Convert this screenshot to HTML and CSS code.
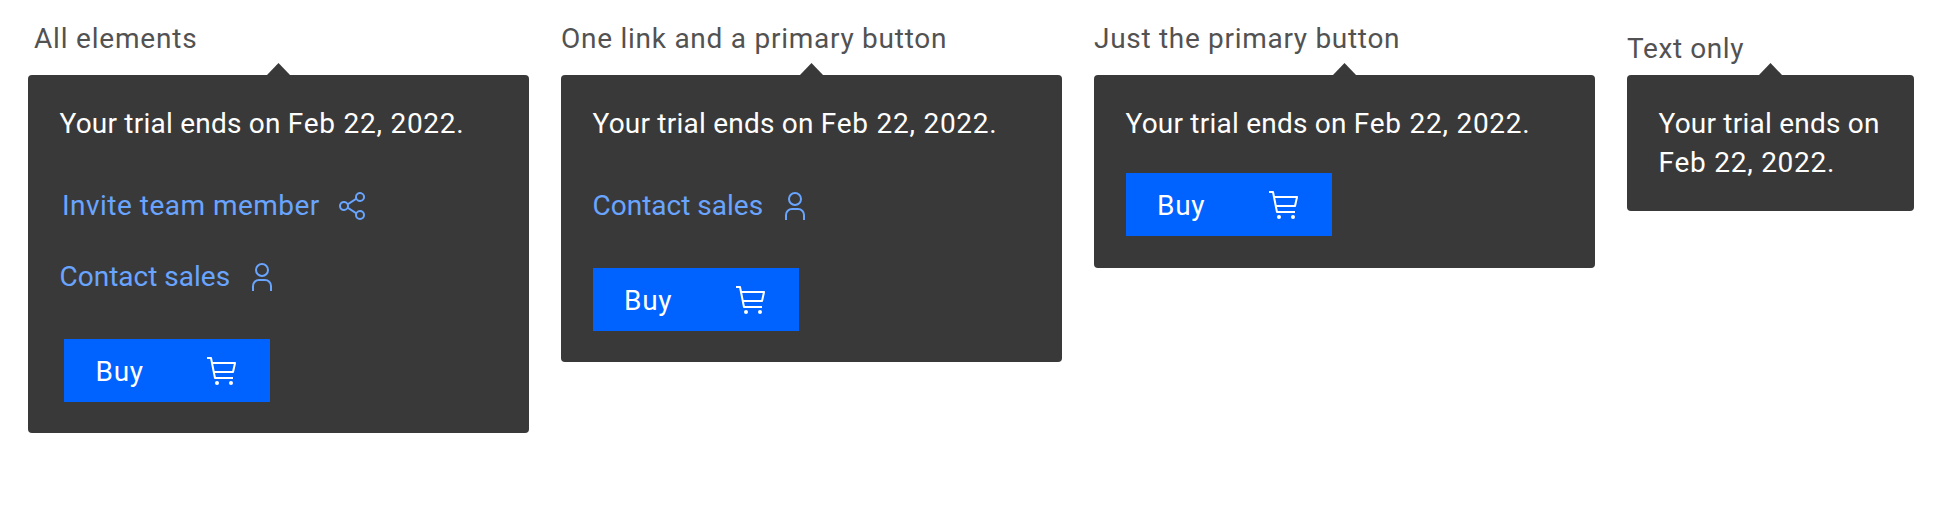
FILE: index.html
```html
<!DOCTYPE html>
<html lang="en">
<head>
<meta charset="utf-8">
<title>Trial popovers</title>
<link rel="stylesheet" href="styles.css">
</head>
<body>
<svg class="sprite" aria-hidden="true">
  <symbol id="share" viewBox="0 0 32 32"><path d="M23,20a5,5,0,0,0-3.89,1.89L11.8,17.32a4.46,4.46,0,0,0,0-2.64l7.31-4.57A5,5,0,1,0,18,7a4.79,4.79,0,0,0,.2,1.32l-7.31,4.57a5,5,0,1,0,0,6.22l7.31,4.57A4.79,4.79,0,0,0,18,25a5,5,0,1,0,5-5ZM23,4a3,3,0,1,1-3,3A3,3,0,0,1,23,4ZM7,19a3,3,0,1,1,3-3A3,3,0,0,1,7,19Zm16,9a3,3,0,1,1,3-3A3,3,0,0,1,23,28Z"/></symbol>
  <symbol id="user" viewBox="0 0 32 32"><path d="M16,4a5,5,0,1,1-5,5,5,5,0,0,1,5-5m0-2a7,7,0,1,0,7,7A7,7,0,0,0,16,2ZM26,30H24V25a5,5,0,0,0-5-5H13a5,5,0,0,0-5,5v5H6V25a7,7,0,0,1,7-7h6a7,7,0,0,1,7,7Z"/></symbol>
  <symbol id="cart" viewBox="0 0 32 32"><circle cx="10" cy="28" r="2"/><circle cx="24" cy="28" r="2"/><path d="M28,7H5.82L5,2.8A1,1,0,0,0,4,2H0V4H3.18L7,23.2A1,1,0,0,0,8,24H26V22H8.82L8,18H26a1,1,0,0,0,1-.78l2-9A1,1,0,0,0,28,7Zm-2.8,9H7.62l-1.4-7H26.8Z"/></symbol>
</svg>
<main class="board">
  <section class="example">
    <h2 class="label label-all">All elements</h2>
    <div class="popover popover-all">
      <p class="message">Your trial ends on <span class="date">Feb 22, 2022.</span></p>
      <a class="link link-invite"><span>Invite team member</span><svg class="icon"><use href="#share"/></svg></a>
      <a class="link link-contact link-next"><span>Contact sales</span><svg class="icon"><use href="#user"/></svg></a>
      <button class="buy buy-indent"><span class="buy-text">Buy</span><svg class="icon"><use href="#cart"/></svg></button>
    </div>
  </section>
  <section class="example">
    <h2 class="label label-link">One link and a primary button</h2>
    <div class="popover popover-link">
      <p class="message">Your trial ends on <span class="date">Feb 22, 2022.</span></p>
      <a class="link link-contact"><span>Contact sales</span><svg class="icon"><use href="#user"/></svg></a>
      <button class="buy"><span class="buy-text">Buy</span><svg class="icon"><use href="#cart"/></svg></button>
    </div>
  </section>
  <section class="example">
    <h2 class="label label-button">Just the primary button</h2>
    <div class="popover popover-button">
      <p class="message">Your trial ends on <span class="date">Feb 22, 2022.</span></p>
      <button class="buy buy-close"><span class="buy-text">Buy</span><svg class="icon"><use href="#cart"/></svg></button>
    </div>
  </section>
  <section class="example example-small">
    <h2 class="label label-text">Text only</h2>
    <div class="popover popover-text">
      <p class="message">Your trial ends on<br><span class="date">Feb 22, 2022.</span></p>
    </div>
  </section>
</main>
</body>
</html>
```
FILE: styles.css
```css
* { box-sizing: border-box; }
body {
  margin: 0;
  background: #fff;
  font-family: Roboto, "Liberation Sans", sans-serif;
  font-size: 28px;
  line-height: 39px;
  letter-spacing: 0.7px;
}
.sprite { display: none; }
.board { display: flex; align-items: flex-start; gap: 32px; padding-left: 28px; }
.example { flex: none; width: 501px; }
.example-small { width: 287px; }
.label {
  height: 75px;
  margin: 0;
  padding-top: 19px;
  color: #525252;
  font-size: inherit;
  font-weight: 400;
  white-space: nowrap;
}
.label-all { padding-left: 6px; letter-spacing: 0.8px; }
.label-link { letter-spacing: 0.74px; }
.label-text { padding-top: 29px; letter-spacing: 0.6px; }
.popover {
  position: relative;
  padding: 29px 31.5px;
  border-radius: 4px;
  background: #393939;
  color: #fff;
}
.popover::before {
  content: "";
  position: absolute;
  top: -12px;
  left: 50%;
  width: 24px;
  height: 12.5px;
  margin-left: -12px;
  background: #393939;
  clip-path: polygon(50% 0, 100% 100%, 0 100%);
}
.popover-all { height: 358px; }
.popover-link { height: 287px; }
.popover-button { height: 193px; }
.popover-text { height: 136px; }
.message { margin: 0; letter-spacing: 0.22px; white-space: nowrap; }
.date { letter-spacing: 0.75px; }
.link {
  display: flex;
  align-items: center;
  justify-content: space-between;
  margin-top: 43px;
  color: #69a5ff;
  white-space: nowrap;
}
.link-invite { width: 309.5px; padding-left: 2.5px; letter-spacing: 0.48px; }
.link-contact { width: 218.5px; letter-spacing: 0; }
.link-next { margin-top: 32px; }
.icon { display: block; flex: none; width: 32px; height: 32px; fill: currentColor; }
.buy {
  display: flex;
  align-items: center;
  justify-content: space-between;
  width: 206.5px;
  height: 63px;
  margin: 43px 0 0;
  padding: 0 31px 0 31.5px;
  border: 0;
  background: #0062ff;
  color: #fff;
  font: inherit;
  letter-spacing: inherit;
}
.buy-text { padding-top: 2px; }
.buy-indent { margin-left: 4.5px; width: 206px; }
.buy-close { margin-top: 30px; }
```
